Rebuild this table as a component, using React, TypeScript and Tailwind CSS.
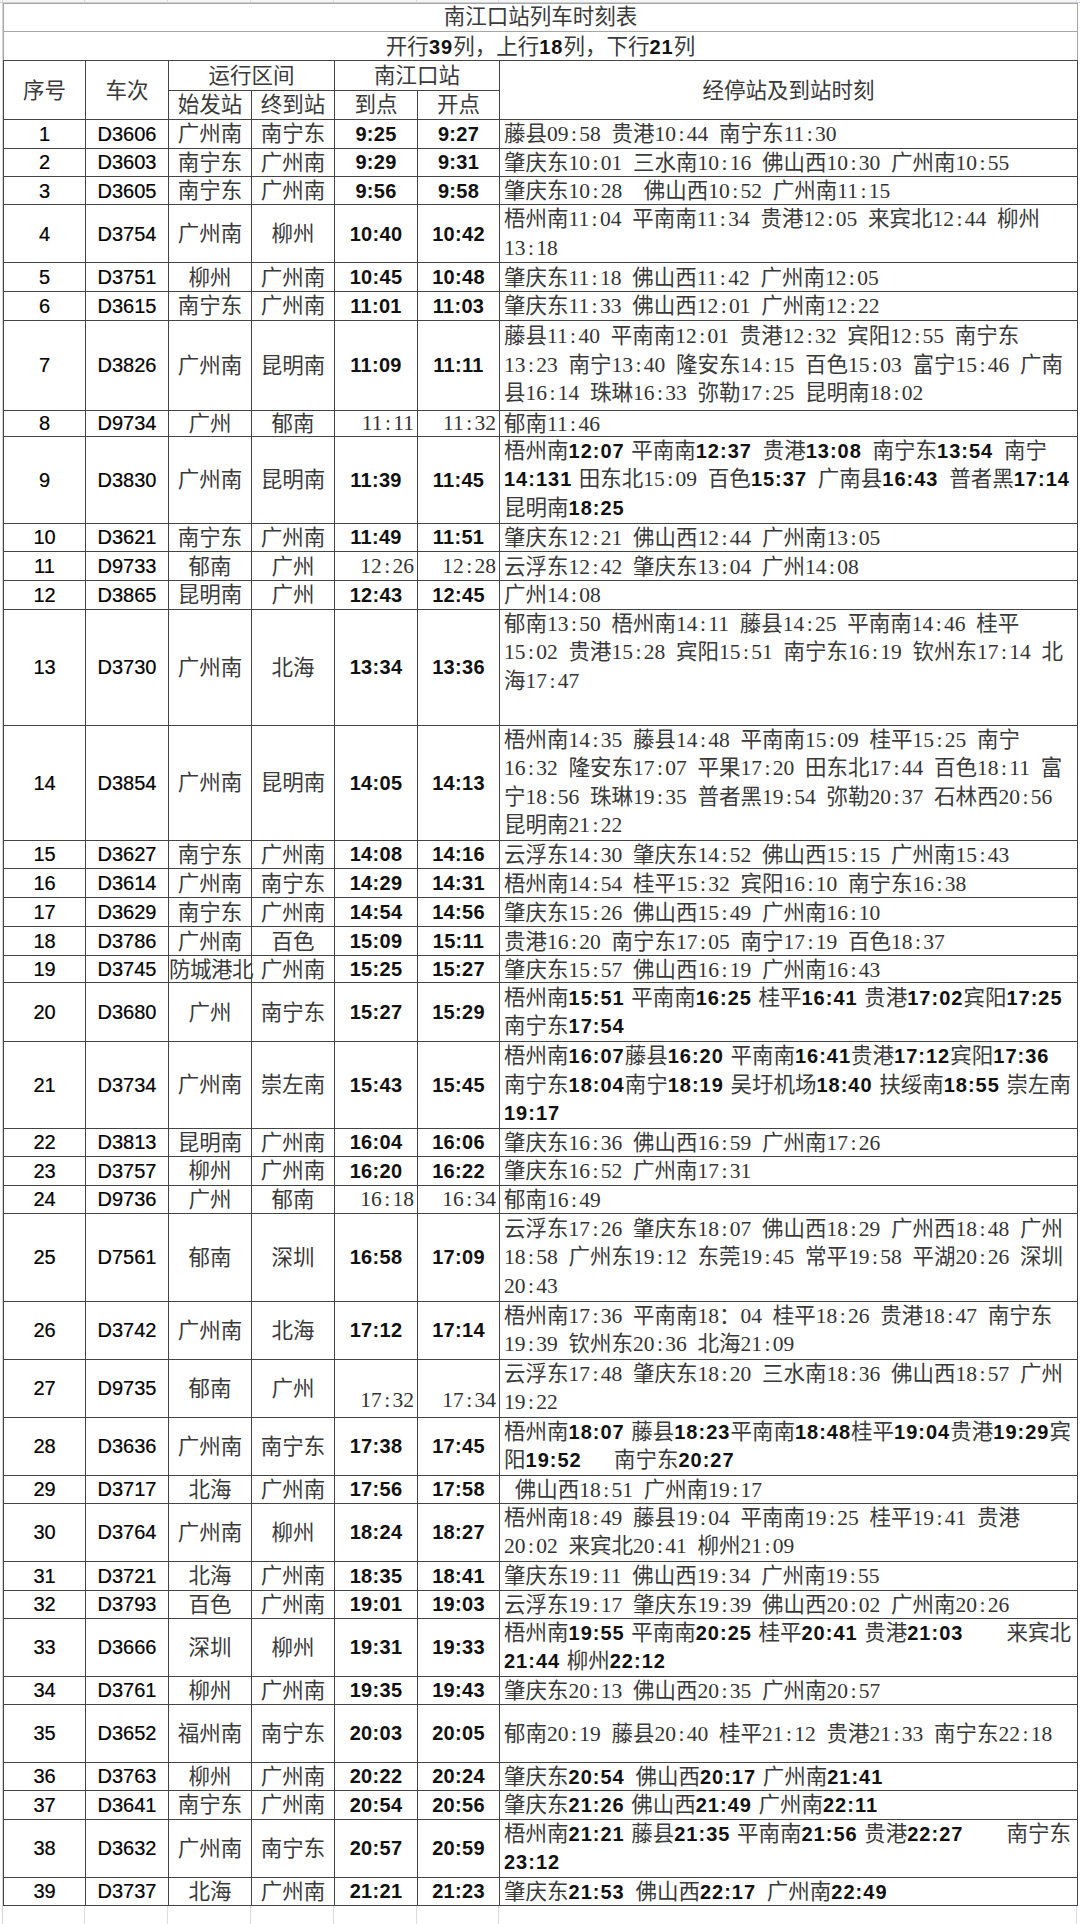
import React from 'react';

type Row = {
  n: string;
  t: string;
  f: string;
  e: string;
  a: string;
  d: string;
  h: string;
  lines: string[];
  serif?: boolean;
  bottom?: boolean;
  top?: boolean;
};

const CJK = "font-['Noto_Sans_CJK_SC',sans-serif] text-[21.5px] leading-none text-[#3a3a3a]";
const SER = "font-['Liberation_Serif',serif] text-[21.5px] leading-none text-[#333]";
const SANS = "font-['Liberation_Sans',sans-serif] text-[20px] leading-none text-black [-webkit-text-stroke:0.2px_#000]";
const BOLD = "font-['Liberation_Sans',sans-serif] font-bold text-[20px] leading-none tracking-[1px] text-[#111]";
const BOLDT = "font-['Liberation_Sans',sans-serif] font-bold text-[20px] leading-none tracking-[0.3px] text-[#111]";

const W = ['w-[82px]', 'w-[83px]', 'w-[83px]', 'w-[83px]', 'w-[83px]', 'w-[82px]', 'w-[578px]'];

function Sim({ s }: { s: string }) {
  const parts = s.split(/([\x20-\x7e]+)/);
  return (
    <>
      {parts.map((p, i) => {
        if (!p) return null;
        if (/^[\x20-\x7e]+$/.test(p)) {
          return (
            <span key={i} className={SER}>
              {p.split('').map((c, j) =>
                c === ':' ? (
                  <span key={j} className="inline-block w-[10.75px] text-center">:</span>
                ) : c === ' ' ? (
                  <span key={j} className="inline-block w-[10.75px]"> </span>
                ) : (
                  <React.Fragment key={j}>{c}</React.Fragment>
                )
              )}
            </span>
          );
        }
        return (
          <span key={i} className={CJK}>
            {p}
          </span>
        );
      })}
    </>
  );
}

function Rich({ s }: { s: string }) {
  const segs = s.split('*');
  return (
    <>
      {segs.map((seg, i) =>
        i % 2 === 1 ? (
          <span key={i} className={BOLD}>
            {seg}
          </span>
        ) : (
          <Sim key={i} s={seg} />
        )
      )}
    </>
  );
}

const rows: Row[] = [
  { n: '1', t: 'D3606', f: '广州南', e: '南宁东', a: '9:25', d: '9:27', h: 'h-[28.5px]', lines: ['藤县09:58 贵港10:44 南宁东11:30'] },
  { n: '2', t: 'D3603', f: '南宁东', e: '广州南', a: '9:29', d: '9:31', h: 'h-[28.5px]', lines: ['肇庆东10:01 三水南10:16 佛山西10:30 广州南10:55'] },
  { n: '3', t: 'D3605', f: '南宁东', e: '广州南', a: '9:56', d: '9:58', h: 'h-[28px]', lines: ['肇庆东10:28  佛山西10:52 广州南11:15'] },
  { n: '4', t: 'D3754', f: '广州南', e: '柳州', a: '10:40', d: '10:42', h: 'h-[58px]', lines: ['梧州南11:04 平南南11:34 贵港12:05 来宾北12:44 柳州', '13:18'] },
  { n: '5', t: 'D3751', f: '柳州', e: '广州南', a: '10:45', d: '10:48', h: 'h-[29px]', lines: ['肇庆东11:18 佛山西11:42 广州南12:05'] },
  { n: '6', t: 'D3615', f: '南宁东', e: '广州南', a: '11:01', d: '11:03', h: 'h-[28.5px]', lines: ['肇庆东11:33 佛山西12:01 广州南12:22'] },
  { n: '7', t: 'D3826', f: '广州南', e: '昆明南', a: '11:09', d: '11:11', h: 'h-[90px]', lines: ['藤县11:40 平南南12:01 贵港12:32 宾阳12:55 南宁东', '13:23 南宁13:40 隆安东14:15 百色15:03 富宁15:46 广南', '县16:14 珠琳16:33 弥勒17:25 昆明南18:02'] },
  { n: '8', t: 'D9734', f: '广州', e: '郁南', a: '11:11', d: '11:32', h: 'h-[26px]', lines: ['郁南11:46'], serif: true },
  { n: '9', t: 'D3830', f: '广州南', e: '昆明南', a: '11:39', d: '11:45', h: 'h-[87px]', lines: ['梧州南*12:07 *平南南*12:37* 贵港*13:08* 南宁东*13:54* 南宁', '*14:131 *田东北15:09 百色*15:37* 广南县*16:43* 普者黑*17:14*', '昆明南*18:25*'] },
  { n: '10', t: 'D3621', f: '南宁东', e: '广州南', a: '11:49', d: '11:51', h: 'h-[28.5px]', lines: ['肇庆东12:21 佛山西12:44 广州南13:05'] },
  { n: '11', t: 'D9733', f: '郁南', e: '广州', a: '12:26', d: '12:28', h: 'h-[29px]', lines: ['云浮东12:42 肇庆东13:04 广州14:08'], serif: true },
  { n: '12', t: 'D3865', f: '昆明南', e: '广州', a: '12:43', d: '12:45', h: 'h-[28.5px]', lines: ['广州14:08'] },
  { n: '13', t: 'D3730', f: '广州南', e: '北海', a: '13:34', d: '13:36', h: 'h-[116px]', lines: ['郁南13:50 梧州南14:11 藤县14:25 平南南14:46 桂平', '15:02 贵港15:28 宾阳15:51 南宁东16:19 钦州东17:14 北', '海17:47'], top: true },
  { n: '14', t: 'D3854', f: '广州南', e: '昆明南', a: '14:05', d: '14:13', h: 'h-[114px]', lines: ['梧州南14:35 藤县14:48 平南南15:09 桂平15:25 南宁', '16:32 隆安东17:07 平果17:20 田东北17:44 百色18:11 富', '宁18:56 珠琳19:35 普者黑19:54 弥勒20:37 石林西20:56', '昆明南21:22'] },
  { n: '15', t: 'D3627', f: '南宁东', e: '广州南', a: '14:08', d: '14:16', h: 'h-[28.5px]', lines: ['云浮东14:30 肇庆东14:52 佛山西15:15 广州南15:43'] },
  { n: '16', t: 'D3614', f: '广州南', e: '南宁东', a: '14:29', d: '14:31', h: 'h-[29px]', lines: ['梧州南14:54 桂平15:32 宾阳16:10 南宁东16:38'] },
  { n: '17', t: 'D3629', f: '南宁东', e: '广州南', a: '14:54', d: '14:56', h: 'h-[29px]', lines: ['肇庆东15:26 佛山西15:49 广州南16:10'] },
  { n: '18', t: 'D3786', f: '广州南', e: '百色', a: '15:09', d: '15:11', h: 'h-[29px]', lines: ['贵港16:20 南宁东17:05 南宁17:19 百色18:37'] },
  { n: '19', t: 'D3745', f: '防城港北', e: '广州南', a: '15:25', d: '15:27', h: 'h-[27px]', lines: ['肇庆东15:57 佛山西16:19 广州南16:43'] },
  { n: '20', t: 'D3680', f: '广州', e: '南宁东', a: '15:27', d: '15:29', h: 'h-[59px]', lines: ['梧州南*15:51 *平南南*16:25 *桂平*16:41 *贵港*17:02*宾阳*17:25*', '南宁东*17:54*'] },
  { n: '21', t: 'D3734', f: '广州南', e: '崇左南', a: '15:43', d: '15:45', h: 'h-[85.5px]', lines: ['梧州南*16:07*藤县*16:20 *平南南*16:41*贵港*17:12*宾阳*17:36*', '南宁东*18:04*南宁*18:19 *吴圩机场*18:40 *扶绥南*18:55 *崇左南', '*19:17*'] },
  { n: '22', t: 'D3813', f: '昆明南', e: '广州南', a: '16:04', d: '16:06', h: 'h-[28.5px]', lines: ['肇庆东16:36 佛山西16:59 广州南17:26'] },
  { n: '23', t: 'D3757', f: '柳州', e: '广州南', a: '16:20', d: '16:22', h: 'h-[28.5px]', lines: ['肇庆东16:52 广州南17:31'] },
  { n: '24', t: 'D9736', f: '广州', e: '郁南', a: '16:18', d: '16:34', h: 'h-[28.5px]', lines: ['郁南16:49'], serif: true },
  { n: '25', t: 'D7561', f: '郁南', e: '深圳', a: '16:58', d: '17:09', h: 'h-[87.5px]', lines: ['云浮东17:26 肇庆东18:07 佛山西18:29 广州西18:48 广州', '18:58 广州东19:12 东莞19:45 常平19:58 平湖20:26 深圳', '20:43'] },
  { n: '26', t: 'D3742', f: '广州南', e: '北海', a: '17:12', d: '17:14', h: 'h-[57.5px]', lines: ['梧州南17:36 平南南18：04 桂平18:26 贵港18:47 南宁东', '19:39 钦州东20:36 北海21:09'] },
  { n: '27', t: 'D9735', f: '郁南', e: '广州', a: '17:32', d: '17:34', h: 'h-[57.5px]', lines: ['云浮东17:48 肇庆东18:20 三水南18:36 佛山西18:57 广州', '19:22'], serif: true, bottom: true },
  { n: '28', t: 'D3636', f: '广州南', e: '南宁东', a: '17:38', d: '17:45', h: 'h-[57.5px]', lines: ['梧州南*18:07 *藤县*18:23*平南南*18:48*桂平*19:04*贵港*19:29*宾', '阳*19:52*   南宁东*20:27*'] },
  { n: '29', t: 'D3717', f: '北海', e: '广州南', a: '17:56', d: '17:58', h: 'h-[28px]', lines: [' 佛山西18:51 广州南19:17'] },
  { n: '30', t: 'D3764', f: '广州南', e: '柳州', a: '18:24', d: '18:27', h: 'h-[58.5px]', lines: ['梧州南18:49 藤县19:04 平南南19:25 桂平19:41 贵港', '20:02 来宾北20:41 柳州21:09'] },
  { n: '31', t: 'D3721', f: '北海', e: '广州南', a: '18:35', d: '18:41', h: 'h-[28.5px]', lines: ['肇庆东19:11 佛山西19:34 广州南19:55'] },
  { n: '32', t: 'D3793', f: '百色', e: '广州南', a: '19:01', d: '19:03', h: 'h-[28px]', lines: ['云浮东19:17 肇庆东19:39 佛山西20:02 广州南20:26'] },
  { n: '33', t: 'D3666', f: '深圳', e: '柳州', a: '19:31', d: '19:33', h: 'h-[58px]', lines: ['梧州南*19:55 *平南南*20:25 *桂平*20:41 *贵港*21:03*    来宾北', '*21:44 *柳州*22:12*'] },
  { n: '34', t: 'D3761', f: '柳州', e: '广州南', a: '19:35', d: '19:43', h: 'h-[28px]', lines: ['肇庆东20:13 佛山西20:35 广州南20:57'] },
  { n: '35', t: 'D3652', f: '福州南', e: '南宁东', a: '20:03', d: '20:05', h: 'h-[58px]', lines: ['郁南20:19 藤县20:40 桂平21:12 贵港21:33 南宁东22:18'] },
  { n: '36', t: 'D3763', f: '柳州', e: '广州南', a: '20:22', d: '20:24', h: 'h-[28.5px]', lines: ['肇庆东*20:54* 佛山西*20:17 *广州南*21:41*'] },
  { n: '37', t: 'D3641', f: '南宁东', e: '广州南', a: '20:54', d: '20:56', h: 'h-[28.5px]', lines: ['肇庆东*21:26 *佛山西*21:49 *广州南*22:11*'] },
  { n: '38', t: 'D3632', f: '广州南', e: '南宁东', a: '20:57', d: '20:59', h: 'h-[57.5px]', lines: ['梧州南*21:21 *藤县*21:35 *平南南*21:56 *贵港*22:27*    南宁东', '*23:12*'] },
  { n: '39', t: 'D3737', f: '北海', e: '广州南', a: '21:21', d: '21:23', h: 'h-[28.5px]', lines: ['肇庆东*21:53* 佛山西*22:17* 广州南*22:49*'] },
];

const TD = "border border-[#444] p-0 text-center whitespace-nowrap font-['Liberation_Sans',sans-serif] text-[20px] leading-[24px]";

function TimeCell({ r, v }: { r: Row; v: string }) {
  if (r.serif) {
    return (
      <td className={TD + ' text-right pr-[3px] ' + (r.bottom ? 'align-bottom pb-[5px]' : '')}>
        <Sim s={v} />
      </td>
    );
  }
  return (
    <td className={TD}>
      <span className={BOLDT}>{v}</span>
    </td>
  );
}

function GridStrip({ h }: { h: string }) {
  return (
    <div className={'flex ' + h}>
      <div className="w-[3px] shrink-0 border-r border-[#d4d4d4]" />
      {W.map((w, i) => (
        <div key={i} className={w + ' shrink-0 border-r border-[#d9dce3]'} />
      ))}
      <div className="flex-1" />
    </div>
  );
}

export default function App() {
  return (
    <div className="w-[1080px] min-h-[1924px] bg-white overflow-hidden font-['Liberation_Sans',sans-serif]">
      <div className="border-b border-[#cfcfcf] bg-[#f4f5f7]">
        <GridStrip h="h-[2px]" />
      </div>
      <div className="flex">
        <div className="w-[3px] shrink-0 border-r border-[#d4d4d4]" />
        <table className="table-fixed border-collapse w-[1074px] shrink-0">
          <colgroup>
            {W.map((w, i) => (
              <col key={i} className={w} />
            ))}
          </colgroup>
          <tbody>
            <tr className="h-[27px]">
              <td colSpan={7} className="border border-[#a6a6a6] p-0 text-center leading-[24px]">
                <span className={CJK}>南江口站列车时刻表</span>
              </td>
            </tr>
            <tr className="h-[29px]">
              <td colSpan={7} className="border border-[#a6a6a6] border-b-[#444] p-0 text-center leading-[24px] font-['Liberation_Sans',sans-serif] text-[20px]">
                <Rich s="开行*39*列，上行*18*列，下行*21*列" />
              </td>
            </tr>
            <tr className="h-[29.5px]">
              <td rowSpan={2} className={TD}>
                <span className={CJK}>序号</span>
              </td>
              <td rowSpan={2} className={TD}>
                <span className={CJK}>车次</span>
              </td>
              <td colSpan={2} className={TD}>
                <span className={CJK}>运行区间</span>
              </td>
              <td colSpan={2} className={TD}>
                <span className={CJK}>南江口站</span>
              </td>
              <td rowSpan={2} className={TD}>
                <span className={CJK}>经停站及到站时刻</span>
              </td>
            </tr>
            <tr className="h-[29.5px]">
              <td className={TD}>
                <span className={CJK}>始发站</span>
              </td>
              <td className={TD}>
                <span className={CJK}>终到站</span>
              </td>
              <td className={TD}>
                <span className={CJK}>到点</span>
              </td>
              <td className={TD}>
                <span className={CJK}>开点</span>
              </td>
            </tr>
            {rows.map((r) => (
              <tr key={r.n} className={r.h}>
                <td className={TD}>
                  <span className={SANS}>{r.n}</span>
                </td>
                <td className={TD}>
                  <span className={SANS}>{r.t}</span>
                </td>
                <td className={TD}>
                  <span className={CJK + (r.f.length > 3 ? ' tracking-[-0.5px]' : '')}>{r.f}</span>
                </td>
                <td className={TD}>
                  <span className={CJK}>{r.e}</span>
                </td>
                <TimeCell r={r} v={r.a} />
                <TimeCell r={r} v={r.d} />
                <td className={TD + ' text-left pl-[4px] ' + (r.top ? 'align-top' : '')}>
                  {r.lines.map((l, i) => (
                    <div key={i} className={r.lines.length > 1 ? 'leading-[28.5px]' : 'leading-[24px]'}>
                      <Rich s={l} />
                    </div>
                  ))}
                </td>
              </tr>
            ))}
          </tbody>
        </table>
        <div className="flex-1" />
      </div>
      <GridStrip h="h-[30px]" />
    </div>
  );
}
